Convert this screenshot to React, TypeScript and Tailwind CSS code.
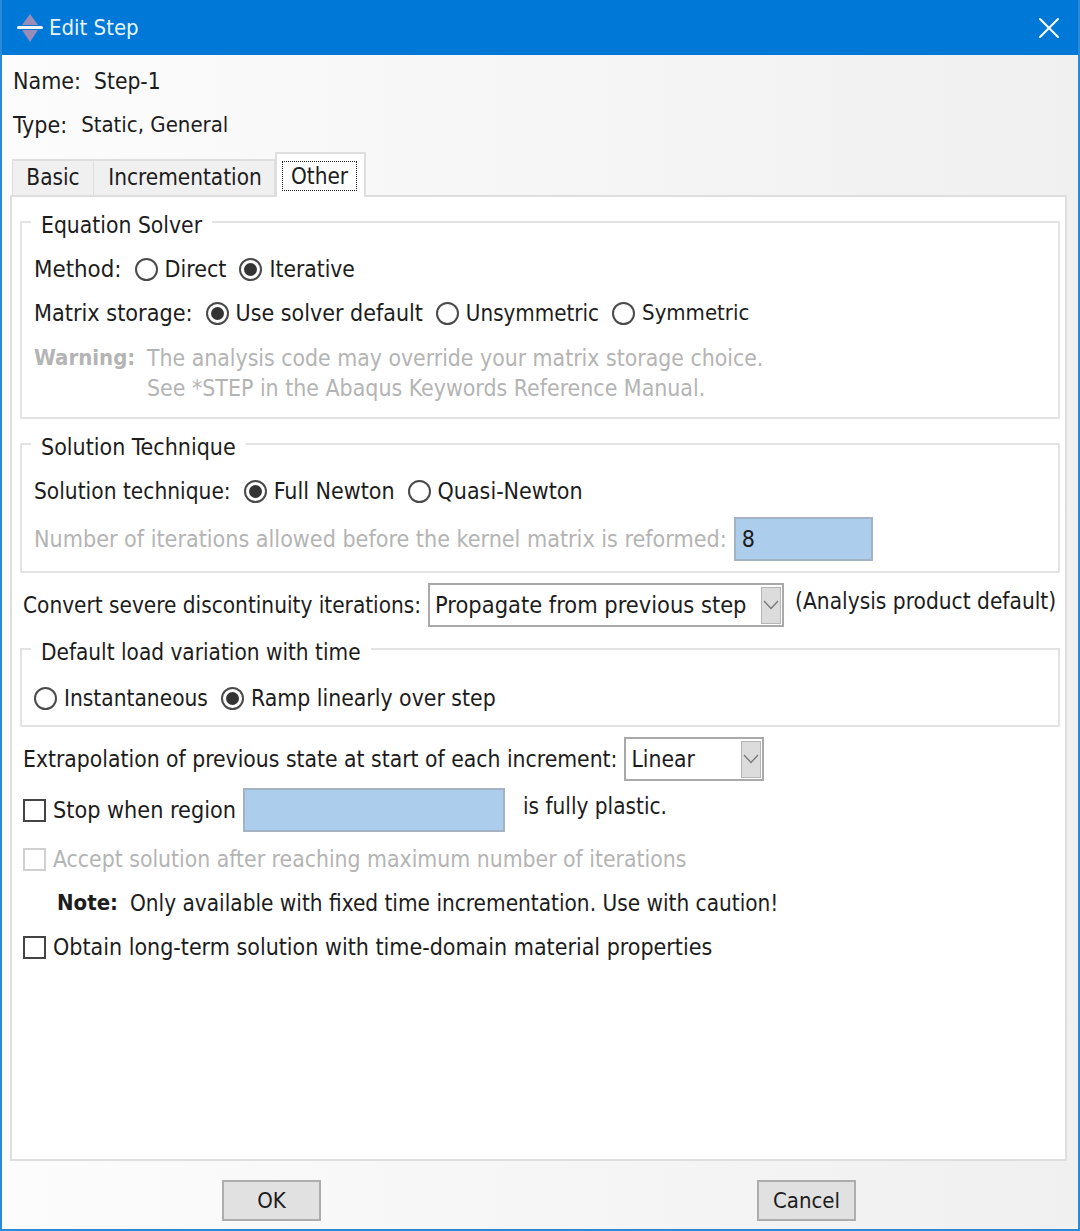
import React from 'react';
import { X } from 'lucide-react';

function Radio({ checked, label, className = '' }: { checked?: boolean; label: string; className?: string }) {
  return (
    <span className={`flex items-center gap-[7px] ${className}`}>
      <span className="w-[23px] h-[23px] rounded-full border-2 border-[#4a4a4a] bg-white flex items-center justify-center">
        {checked && <span className="w-[13px] h-[13px] rounded-full bg-[#333]" />}
      </span>
      <span>{label}</span>
    </span>
  );
}

function Check({ label, disabled, className = '' }: { label: string; disabled?: boolean; className?: string }) {
  return (
    <span className={`flex items-center gap-[7px] ${disabled ? 'text-[#b4b4b4]' : ''} ${className}`}>
      <span className={`w-[23px] h-[23px] border-2 bg-white ${disabled ? 'border-[#d0d0d0]' : 'border-[#444]'}`} />
      <span>{label}</span>
    </span>
  );
}

function Group({ title, className, titleClass = 'text-[22.7px]', children }: { title: string; className: string; titleClass?: string; children: React.ReactNode }) {
  return (
    <div className={`relative ml-[8px] mr-[5px] border-2 border-[#e3e3e3] ${className}`}>
      <span className={`absolute left-[9px] top-[-11px] h-[26px] px-[10px] bg-white leading-[26px] ${titleClass}`}>{title}</span>
      {children}
    </div>
  );
}

function Combo({ text, className, textClass = '' }: { text: string; className: string; textClass?: string }) {
  return (
    <div className={`flex items-center justify-between h-[44px] border-2 border-[#a9a9a9] bg-white pl-[5px] pr-[1px] ${className}`}>
      <span className={textClass}>{text}</span>
      <span className="w-[20px] h-[37px] bg-[#dcdcdc] border border-[#b5b5b5] flex items-center justify-center">
        <svg width="16" height="10" viewBox="0 0 16 10" fill="none" stroke="#777" strokeWidth="1.3">
          <path d="M1 1l7 7.5L15 1" />
        </svg>
      </span>
    </div>
  );
}

function Button({ label }: { label: string }) {
  return (
    <div className="w-[99px] h-[41px] bg-[#e1e1e1] border-2 border-[#adadad] flex items-center justify-center text-[22px]">{label}</div>
  );
}

export default function App() {
  return (
    <div
      className="w-[1080px] h-[1231px] flex flex-col overflow-hidden border-x-2 border-b-2 border-[#2b8ad8] text-[#1c1c1c] text-[23px] leading-[26px] bg-gradient-to-r from-[#fcfcfc] to-[#f0f0f0]"
      style={{ fontFamily: '"DejaVu Sans Condensed", "DejaVu Sans", sans-serif' }}
    >
      {/* Title bar */}
      <div className="h-[55px] shrink-0 -mx-[2px] bg-[#0078d7] flex items-center justify-between pl-[17px] pr-[13px] text-[#e8f4fc] text-[22px]">
        <div className="flex items-center gap-[6px]">
          <svg width="26" height="28" viewBox="0 0 26 28">
            <path d="M13 0 L21 11 H5 Z" fill="#9a8bb8" />
            <path d="M13 28 L21 16 H5 Z" fill="#9a8bb8" />
            <rect x="0" y="12" width="26" height="3" rx="1.5" fill="#f4f4f4" />
          </svg>
          <span>Edit Step</span>
        </div>
        <X className="w-[36px] h-[36px] text-white" strokeWidth={1.3} />
      </div>

      {/* Name and type */}
      <div className="h-[100px] shrink-0 pl-[11px] flex flex-col">
        <div className="h-[26px] mt-[13px] flex gap-[13px]"><span>Name:</span><span className="text-[22.6px]">Step-1</span></div>
        <div className="h-[26px] mt-[18px] flex gap-[14px]"><span>Type:</span><span className="text-[22px]">Static, General</span></div>
      </div>

      {/* Tabs */}
      <div className="h-[40px] shrink-0 pl-[10px] flex items-end relative z-10 text-[22.4px]">
        <div className="h-[36px] w-[82px] bg-[#f0f0f0] border-t-2 border-x border-[#dedede] flex items-center justify-center pb-[2px]">Basic</div>
        <div className="h-[36px] w-[181px] bg-[#f0f0f0] border-t-2 border-r border-[#dedede] flex items-center justify-center pl-[2px] pb-[2px]">Incrementation</div>
        <div className="h-[45px] w-[91px] -mb-[2px] bg-white border-t-2 border-x-2 border-[#dedede] flex items-start justify-center pt-[7px] pr-[2px]">
          <span className="h-[30px] px-[8px] border border-dotted border-[#222] flex items-center">Other</span>
        </div>
      </div>

      {/* Panel */}
      <div className="h-[966px] shrink-0 ml-[8px] w-[1057px] bg-white border-2 border-[#dedede] flex flex-col">
        <Group title="Equation Solver" className="mt-[24px] h-[198px] pl-[12px]">
          <div className="h-[26px] mt-[33px] flex items-center gap-[13px]">
            <span className="text-[23.8px]">Method:</span>
            <Radio label="Direct" />
            <Radio checked label="Iterative" className="text-[22.6px]" />
          </div>
          <div className="h-[26px] mt-[18px] flex items-center gap-[13px]">
            <span className="text-[23.2px]">Matrix storage:</span>
            <Radio checked label="Use solver default" />
            <Radio label="Unsymmetric" className="text-[22.2px]" />
            <Radio label="Symmetric" className="text-[22px]" />
          </div>
          <div className="mt-[19px] flex text-[#b4b4b4] text-[22.8px]">
            <span className="w-[113px] font-bold text-[22px]">Warning:</span>
            <div className="flex flex-col gap-[4px]">
              <span>The analysis code may override your matrix storage choice.</span>
              <span className="text-[22.9px]">See *STEP in the Abaqus Keywords Reference Manual.</span>
            </div>
          </div>
        </Group>

        <Group title="Solution Technique" titleClass="text-[23px]" className="mt-[24px] h-[130px] pl-[12px]">
          <div className="h-[26px] mt-[33px] flex items-center gap-[13px]">
            <span className="text-[22.5px]">Solution technique:</span>
            <Radio checked label="Full Newton" />
            <Radio label="Quasi-Newton" />
          </div>
          <div className="mt-[13px] flex items-center gap-[7px] text-[#b4b4b4]">
            <span className="text-[23.1px]">Number of iterations allowed before the kernel matrix is reformed:</span>
            <div className="w-[139px] h-[44px] bg-[#adcdec] border-2 border-[#a3b3c3] pl-[6px] flex items-center text-[#1c1c1c]">8</div>
          </div>
        </Group>

        <div className="mt-[10px] h-[44px] pl-[11px] flex items-center gap-[7px] text-[22.5px]">
          <span className="text-[22.4px]">Convert severe discontinuity iterations:</span>
          <Combo text="Propagate from previous step" textClass="text-[23.4px]" className="w-[356px]" />
          <span className="ml-[4px] -mt-[8px]">(Analysis product default)</span>
        </div>

        <Group title="Default load variation with time" titleClass="text-[22.4px]" className="mt-[21px] h-[79px] pl-[12px] text-[22.5px]">
          <div className="h-[26px] mt-[35px] flex items-center gap-[13px]">
            <Radio label="Instantaneous" />
            <Radio checked label="Ramp linearly over step" className="text-[22.8px]" />
          </div>
        </Group>

        <div className="mt-[10px] h-[44px] pl-[11px] flex items-center gap-[7px] text-[22.7px]">
          <span>Extrapolation of previous state at start of each increment:</span>
          <Combo text="Linear" className="w-[140px]" />
        </div>

        <div className="mt-[7px] h-[44px] pl-[11px] flex items-center gap-[7px]">
          <Check label="Stop when region" className="text-[23.2px]" />
          <div className="w-[262px] h-[44px] bg-[#adcdec] border-2 border-[#a3b3c3]" />
          <span className="ml-[11px] -mt-[8px] text-[22.4px]">is fully plastic.</span>
        </div>

        <div className="mt-[14px] h-[26px] pl-[11px] flex items-center">
          <Check disabled label="Accept solution after reaching maximum number of iterations" className="text-[22.75px]" />
        </div>

        <div className="mt-[18px] h-[26px] pl-[45px] flex items-center gap-[12px] text-[22.4px]">
          <span className="font-bold text-[22px]">Note:</span>
          <span>Only available with fixed time incrementation. Use with caution!</span>
        </div>

        <div className="mt-[18px] h-[26px] pl-[11px] flex items-center">
          <Check label="Obtain long-term solution with time-domain material properties" />
        </div>
      </div>

      {/* Footer */}
      <div className="flex-1 flex justify-between pl-[220px] pr-[222px] pt-[19px]">
        <Button label="OK" />
        <Button label="Cancel" />
      </div>
    </div>
  );
}
